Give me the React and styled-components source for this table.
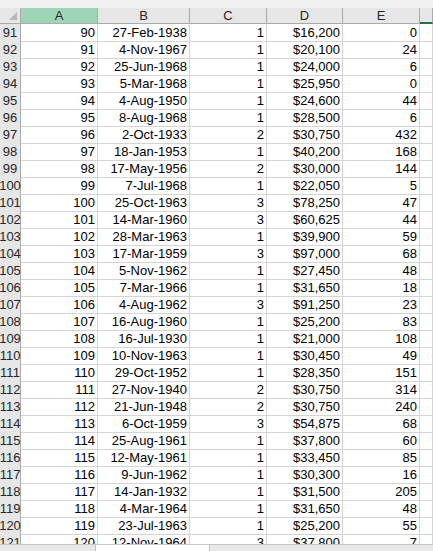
import React from "react";
import styled, { createGlobalStyle } from "styled-components";

const GlobalStyle = createGlobalStyle`
  html, body {
    margin: 0;
    padding: 0;
    background: #ffffff;
    overflow: hidden;
  }
  body {
    font-family: "Liberation Sans", Arial, sans-serif;
  }
`;

const COLUMNS = "21px 77px 92px 77px 76px 77px 1fr";

const rows = [
  [91, 90, "27-Feb-1938", 1, "$16,200", 0],
  [92, 91, "4-Nov-1967", 1, "$20,100", 24],
  [93, 92, "25-Jun-1968", 1, "$24,000", 6],
  [94, 93, "5-Mar-1968", 1, "$25,950", 0],
  [95, 94, "4-Aug-1950", 1, "$24,600", 44],
  [96, 95, "8-Aug-1968", 1, "$28,500", 6],
  [97, 96, "2-Oct-1933", 2, "$30,750", 432],
  [98, 97, "18-Jan-1953", 1, "$40,200", 168],
  [99, 98, "17-May-1956", 2, "$30,000", 144],
  [100, 99, "7-Jul-1968", 1, "$22,050", 5],
  [101, 100, "25-Oct-1963", 3, "$78,250", 47],
  [102, 101, "14-Mar-1960", 3, "$60,625", 44],
  [103, 102, "28-Mar-1963", 1, "$39,900", 59],
  [104, 103, "17-Mar-1959", 3, "$97,000", 68],
  [105, 104, "5-Nov-1962", 1, "$27,450", 48],
  [106, 105, "7-Mar-1966", 1, "$31,650", 18],
  [107, 106, "4-Aug-1962", 3, "$91,250", 23],
  [108, 107, "16-Aug-1960", 1, "$25,200", 83],
  [109, 108, "16-Jul-1930", 1, "$21,000", 108],
  [110, 109, "10-Nov-1963", 1, "$30,450", 49],
  [111, 110, "29-Oct-1952", 1, "$28,350", 151],
  [112, 111, "27-Nov-1940", 2, "$30,750", 314],
  [113, 112, "21-Jun-1948", 2, "$30,750", 240],
  [114, 113, "6-Oct-1959", 3, "$54,875", 68],
  [115, 114, "25-Aug-1961", 1, "$37,800", 60],
  [116, 115, "12-May-1961", 1, "$33,450", 85],
  [117, 116, "9-Jun-1962", 1, "$30,300", 16],
  [118, 117, "14-Jan-1932", 1, "$31,500", 205],
  [119, 118, "4-Mar-1964", 1, "$31,650", 48],
  [120, 119, "23-Jul-1963", 1, "$25,200", 55],
  [121, 120, "12-Nov-1964", 3, "$37,800", 7],
];

const Sheet = styled.div`
  width: 433px;
  height: 551px;
  display: flex;
  flex-direction: column;
  overflow: hidden;
  font-size: 13px;
  color: #000;
`;

const TopStrip = styled.div`
  height: 8px;
  flex: none;
  background: #f1f1f1;
`;

const HeaderRow = styled.div`
  display: grid;
  grid-template-columns: ${COLUMNS};
  height: 16px;
  flex: none;
  background: #e6e6e6;
`;

const Corner = styled.div`
  position: relative;
  border-right: 1px solid #ababab;
  border-bottom: 1px solid #ababab;

  &::after {
    content: "";
    position: absolute;
    right: 3px;
    bottom: 3px;
    width: 0;
    height: 0;
    border-left: 8px solid transparent;
    border-bottom: 8px solid #b5b5b5;
  }
`;

const ColHead = styled.div`
  box-sizing: border-box;
  text-align: center;
  line-height: 15px;
  color: #262626;
  background: ${(p) => (p.$selected ? "#9fd5b7" : "transparent")};
  border-right: 1px solid #ababab;
  border-bottom: ${(p) => (p.$active ? "2px solid #217346" : "1px solid #ababab")};
`;

const Body = styled.div`
  flex: 1;
  overflow: hidden;
`;

const Row = styled.div`
  display: grid;
  grid-template-columns: ${COLUMNS};
  height: 17px;
`;

const RowHead = styled.div`
  box-sizing: border-box;
  display: flex;
  justify-content: center;
  background: #e6e6e6;
  color: #262626;
  line-height: 16px;
  padding-top: 1px;
  border-right: 1px solid #ababab;
  border-bottom: 1px solid #cfcfcf;
  white-space: nowrap;
`;

const Cell = styled.div`
  box-sizing: border-box;
  padding: 1px 2px 0 2px;
  line-height: 16px;
  text-align: ${(p) => p.$align || "right"};
  white-space: nowrap;
  overflow: hidden;
  border-right: 1px solid #d4d4d4;
  border-bottom: 1px solid #d4d4d4;
`;

const TabBar = styled.div`
  height: 6px;
  flex: none;
  display: flex;
  background: #e8e8e8;
  border-top: 1px solid #c6c6c6;
`;

const Tab = styled.div`
  margin-left: 95px;
  width: 113px;
  background: #ffffff;
  border-left: 1px solid #bdbdbd;
  border-right: 1px solid #bdbdbd;
`;

const letters = ["A", "B", "C", "D", "E", ""];

export default function App() {
  return (
    <>
      <GlobalStyle />
      <Sheet>
        <TopStrip />
        <HeaderRow>
          <Corner />
          {letters.map((l, i) => (
            <ColHead key={i} $selected={l === "A"} $active={i === 5}>
              {l}
            </ColHead>
          ))}
        </HeaderRow>
        <Body>
          {rows.map(([n, a, b, c, d, e]) => (
            <Row key={n}>
              <RowHead>{n}</RowHead>
              <Cell>{a}</Cell>
              <Cell>{b}</Cell>
              <Cell>{c}</Cell>
              <Cell>{d}</Cell>
              <Cell>{e}</Cell>
              <Cell />
            </Row>
          ))}
        </Body>
        <TabBar>
          <Tab />
        </TabBar>
      </Sheet>
    </>
  );
}
